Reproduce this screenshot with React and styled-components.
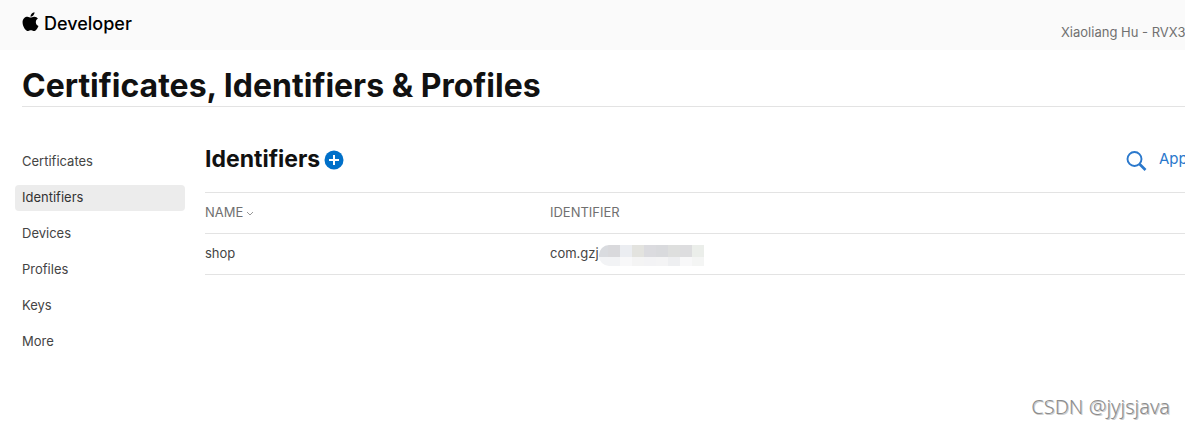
import React from "react";
import styled, { createGlobalStyle } from "styled-components";

const GlobalStyle = createGlobalStyle`
    * {
        box-sizing: border-box;
    }

    body {
        margin: 0;
        background: #fff;
        color: #444;
        font-family: Inter, "Liberation Sans", sans-serif;
        font-size: 13px;
        line-height: 20px;
        overflow-x: hidden;
    }
`;

const Page = styled.div`
    position: relative;
    min-height: 100vh;
    overflow: hidden;
`;

const Header = styled.header`
    display: flex;
    justify-content: space-between;
    height: 50px;
    padding-left: 22px;
    background: #fafafa;
`;

const Brand = styled.a`
    display: flex;
    align-items: center;
    gap: 5px;
    height: 48px;
    color: #000;
    font-size: 18px;
    font-weight: 500;
    text-decoration: none;

    svg {
        width: 17px;
        height: 19px;
        margin-bottom: 5px;
    }
`;

const Account = styled.span`
    align-self: flex-end;
    width: 124px;
    padding-bottom: 8px;
    color: #707070;
    white-space: nowrap;
`;

const TitleBar = styled.div`
    margin-left: 22px;
    padding-top: 16px;
    border-bottom: 1px solid #e3e3e3;
`;

const Title = styled.h1`
    margin: 0;
    color: #111;
    font-size: 32px;
    font-weight: 700;
    line-height: 40px;
`;

const Columns = styled.div`
    display: flex;
    gap: 20px;
    padding: 42px 0 0 15px;
`;

const Sidebar = styled.nav`
    display: flex;
    flex-direction: column;
    flex: none;
    gap: 10px;
    width: 170px;
`;

const SideLink = styled.a`
    padding: 2px 7px 4px;
    border-radius: 4px;
    background: ${(props) => (props.$active ? "#ececec" : "transparent")};
    color: ${(props) => (props.$active ? "#333" : "#444")};
    text-decoration: none;
`;

const Main = styled.main`
    flex: 1;
    min-width: 0;
`;

const Toolbar = styled.div`
    display: flex;
    align-items: center;
    height: 22px;
    margin-bottom: 21px;
`;

const Heading = styled.h2`
    margin: 0 4px 2px 0;
    color: #111;
    font-size: 23px;
    font-weight: 700;
`;

const IconButton = styled.button`
    display: flex;
    padding: 0;
    border: 0;
    background: none;
    color: #0070c9;
    cursor: pointer;
`;

const Filters = styled.div`
    display: flex;
    align-items: center;
    gap: 12px;
    margin-left: auto;
`;

const FilterButton = styled.button`
    width: 26px;
    padding: 0 0 2px;
    border: 0;
    background: none;
    color: #2a78cc;
    font-family: inherit;
    font-size: 15px;
    line-height: 20px;
    text-align: left;
    white-space: nowrap;
    cursor: pointer;
`;

const Table = styled.table`
    width: 100%;
    border-collapse: collapse;
    border-top: 1px solid #e3e3e3;
    text-align: left;
    table-layout: fixed;

    th,
    td {
        height: 41px;
        padding: 0 0 2px;
        border-bottom: 1px solid #e3e3e3;
    }

    th {
        color: #707070;
        font-weight: 400;
    }

    th:first-child {
        width: 345px;
    }
`;

const SortButton = styled.button`
    display: flex;
    align-items: center;
    gap: 3px;
    padding: 0;
    border: 0;
    background: none;
    color: inherit;
    font: inherit;
    cursor: pointer;

    svg {
        margin-top: 2px;
    }
`;

const Identifier = styled.div`
    display: flex;
    align-items: center;
    height: 20px;
`;

const Mask = styled.span`
    display: grid;
    grid-template-columns: 9px repeat(8, 12px);
    grid-template-rows: 12px 9px;
    margin-top: 5px;
    border-radius: 10px 0 0 10px;
    overflow: hidden;
`;

const Block = styled.span`
    background: ${(props) => props.$color};
`;

const Watermark = styled.div`
    position: absolute;
    right: 15px;
    bottom: 7px;
    color: #8c8c8c;
    font-family: "Noto Sans", sans-serif;
    font-size: 20px;
    font-weight: 300;
    line-height: 28px;
    text-shadow: 1px 1px 0 #ccc;
`;

const links = ["Certificates", "Identifiers", "Devices", "Profiles", "Keys", "More"];

const blocks = [
    "#d9dbdf", "#d9d9dc", "#ebedf1", "#e3e3df", "#dbdbdf", "#d9dadd", "#dedfde", "#dddddf", "#ebeeea",
    "#f2f3f5", "#f2f3f5", "#f8f8f9", "#f4f4f4", "#f3f3f5", "#f4f4f5", "#eeeff1", "#f8f8f9", "#f4f5f4",
];

const AppleIcon = () => (
    <svg viewBox="4 28 376 450" fill="currentColor" aria-hidden="true">
        <path d="M318.7 268.700c-.2-36.700 16.400-64.400 50-84.800-18.800-26.900-47.200-41.700-84.700-44.600-35.500-2.800-74.300 20.700-88.500 20.700-15 0-49.400-19.700-76.400-19.700C63.300 141.200 4 184.800 4 273.500q0 39.300 14.400 81.200c12.800 36.700 59 126.700 107.200 125.200 25.200-.6 43-17.900 75.800-17.900 31.800 0 48.300 17.900 76.400 17.900 48.600-.7 90.400-82.500 102.600-119.300-65.200-30.700-61.700-90-61.700-91.900zm-56.600-164.200c27.300-32.400 24.800-61.900 24-72.500-24.100 1.400-52 16.400-67.900 34.900-17.500 19.800-27.800 44.300-25.600 71.900 26.100 2 49.900-11.400 69.500-34.300z" />
    </svg>
);

const PlusIcon = () => (
    <svg width="20" height="20" viewBox="0 0 20 20" aria-hidden="true">
        <circle cx="10" cy="10" r="9.500" fill="currentColor" />
        <path d="M10 5v10M5 10h10" stroke="#fff" strokeWidth="2" />
    </svg>
);

const SearchIcon = () => (
    <svg width="21" height="21" viewBox="0 0 21 21" fill="none" stroke="#2a78cc" aria-hidden="true">
        <circle cx="8.500" cy="9" r="7" strokeWidth="1.900" />
        <path d="M13.500 14l6 6" strokeWidth="2.600" />
    </svg>
);

const ChevronIcon = () => (
    <svg width="8" height="5" viewBox="0 0 8 5" fill="none" stroke="#999" aria-hidden="true">
        <path d="M1 1l3 3 3-3" />
    </svg>
);

export default class App extends React.Component {

    render() {
        return(
            <Page>
                <GlobalStyle/>
                <Header>
                    <Brand href="#">
                        <AppleIcon/>
                        Developer
                    </Brand>
                    <Account>Xiaoliang Hu - RVX3</Account>
                </Header>
                <TitleBar>
                    <Title>Certificates, Identifiers &amp; Profiles</Title>
                </TitleBar>
                <Columns>
                    <Sidebar>
                        {links.map((link) => (
                            <SideLink key={link} href="#" $active={link === "Identifiers"}>{link}</SideLink>
                        ))}
                    </Sidebar>
                    <Main>
                        <Toolbar>
                            <Heading>Identifiers</Heading>
                            <IconButton type="button" aria-label="Add identifier"><PlusIcon/></IconButton>
                            <Filters>
                                <IconButton type="button" aria-label="Search"><SearchIcon/></IconButton>
                                <FilterButton type="button">App</FilterButton>
                            </Filters>
                        </Toolbar>
                        <Table>
                            <thead>
                                <tr>
                                    <th scope="col"><SortButton type="button">NAME <ChevronIcon/></SortButton></th>
                                    <th scope="col">IDENTIFIER</th>
                                </tr>
                            </thead>
                            <tbody>
                                <tr>
                                    <td>shop</td>
                                    <td>
                                        <Identifier>
                                            com.gzj
                                            <Mask>
                                                {blocks.map((color, index) => <Block key={index} $color={color}/>)}
                                            </Mask>
                                        </Identifier>
                                    </td>
                                </tr>
                            </tbody>
                        </Table>
                    </Main>
                </Columns>
                <Watermark>CSDN @jyjsjava</Watermark>
            </Page>
        )
    }
}
